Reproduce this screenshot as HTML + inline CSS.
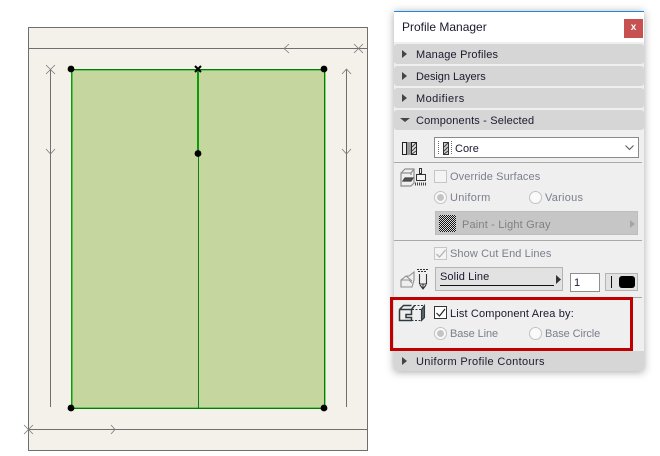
<!DOCTYPE html>
<html><head><meta charset="utf-8">
<style>
html,body{margin:0;padding:0;background:#fff}
#r{position:relative;width:660px;height:456px;overflow:hidden;background:#fff;font-family:"Liberation Sans",sans-serif;font-size:11px;color:#1a1a2e}
.a{position:absolute}
.t{position:absolute;white-space:nowrap;line-height:14px;letter-spacing:.2px}
.g{color:#7b7f8c}
.bar{position:absolute;left:394px;width:250px;height:20px;background:#d6d6d6;border-radius:3px}
.cb{position:absolute;width:11px;height:11px;border:1px solid #c6c6c6;background:#f4f4f4}
.rd{position:absolute;width:11px;height:11px;border:1px solid #c2c2c2;border-radius:50%;background:#fafafa}
.rd.on:after{content:"";position:absolute;left:2px;top:2px;width:7px;height:7px;border-radius:50%;background:#c4c4c4}
</style></head><body><div id="r">
<svg class="a" style="left:0;top:0" width="392" height="456" fill="none" shape-rendering="crispEdges">
<rect x="28.500" y="27.500" width="339" height="423" fill="#f3f1ea" stroke="#6f6f6f"/>
<path d="M28 48.500H367M28 429.500H367M50.500 70V407M346.500 70V407" stroke="#6f6f6f"/>
<rect x="71" y="69" width="254" height="339" fill="#c5d69e"/>
<g shape-rendering="auto" stroke="#7a7a7a" stroke-width=".8">
<path d="M46 65l9 9M55 65l-9 9M46 149l4.500 5 4.500-5M342 74l4.500-5 4.500 5M342 149l4.500 5 4.500-5M289 44l-5 4.500 5 4.500M363 44l-9 9M354 44l9 9M24 425l9 9M33 425l-9 9M111 425l4 4.500-4 4.500"/>
</g>
<path d="M71.500 70V408" stroke="#0f9a0f"/>
<path d="M72.500 70V407" stroke="#5fc04f"/>
<path d="M71 69.500H325M71 408.500H325" stroke="#0a780a"/>
<path d="M324.500 70V408" stroke="#0a780a"/>
<path d="M325.500 70V408" stroke="#7fd870"/>
<path d="M72 407.500H324M72 70.500H324" stroke="#6cc75c"/>
<path d="M198.500 153V408" stroke="#0f7f0f"/>
<path d="M197 70h2V153h-2z" fill="#0a9c0a"/>
<g shape-rendering="auto" fill="#000">
<circle cx="71" cy="69" r="3.400"/><circle cx="324" cy="69" r="3.400"/><circle cx="71" cy="408" r="3.400"/><circle cx="324" cy="408" r="3.400"/><circle cx="198" cy="153.500" r="3.400"/>
<path d="M195 66l6 6M201 66l-6 6" stroke="#000" stroke-width="2"/>
</g>
</svg>

<div class="a" style="left:394px;top:11px;width:250px;height:360px;background:#efefef;box-shadow:0 1px 8px rgba(0,0,0,.35)"></div>
<div class="a" style="left:394px;top:11px;width:250px;height:31px;background:#fff;border-top:1px solid #1e88e5;box-sizing:border-box"></div>
<div class="t" style="left:402px;top:20px;font-size:12px;letter-spacing:0">Profile Manager</div>
<div class="a" style="left:624px;top:19px;width:19px;height:19px;background:#c75050;color:#fff;font:bold 10px/18px 'Liberation Sans',sans-serif;text-align:center">x</div>

<div class="bar" style="top:44px"></div>
<div class="bar" style="top:66px"></div>
<div class="bar" style="top:88px"></div>
<div class="bar" style="top:110px"></div>
<div class="bar" style="top:351px;height:20px;border-radius:0 0 2px 2px"></div>
<svg class="a" style="left:394px;top:40px" width="20" height="330" fill="#444">
<path d="M8 10l5 4-5 4zM8 32l5 4-5 4zM8 54l5 4-5 4zM6 78h10l-5 4zM8 317l5 4-5 4z"/>
</svg>
<div class="t" style="left:416px;top:48px;letter-spacing:.18px">Manage Profiles</div>
<div class="t" style="left:416px;top:70px;letter-spacing:-.05px">Design Layers</div>
<div class="t" style="left:416px;top:92px;letter-spacing:.45px">Modifiers</div>
<div class="t" style="left:416px;top:114px;letter-spacing:.16px">Components - Selected</div>
<div class="t" style="left:416px;top:355px;letter-spacing:.35px">Uniform Profile Contours</div>

<!-- core row -->
<svg class="a" style="left:400px;top:139px" width="20" height="18" fill="none" stroke="#222" shape-rendering="crispEdges">
<rect x="2.500" y="3.500" width="4" height="12"/>
<rect x="7" y="3" width="4" height="13" fill="#999" stroke="none"/>
<rect x="11.500" y="3.500" width="5" height="12" fill="#ddd"/>
<path d="M12 8l4-4M12 12l4-4M12 15l4-3" stroke="#444" shape-rendering="auto"/>
</svg>
<div class="a" style="left:434px;top:137px;width:205px;height:21px;box-sizing:border-box;background:#fff;border:1px solid #8a8a8a"></div>
<svg class="a" style="left:436px;top:139px" width="20" height="18" fill="none" stroke="#333" shape-rendering="crispEdges">
<path d="M2.500 2v14" stroke="#666" stroke-dasharray="1 1"/>
<rect x="7.500" y="3.500" width="5" height="12" fill="#ccc"/><path d="M8 8l4-4M8 12l4-4M8 15l4-3" stroke="#444" shape-rendering="auto"/>
<path d="M15.500 2v14" stroke="#666" stroke-dasharray="1 1"/>
</svg>
<div class="t" style="left:455px;top:142px;letter-spacing:0">Core</div>
<svg class="a" style="left:624px;top:144px" width="12" height="8" fill="none" stroke="#555"><path d="M1.500 1.500l4 4 4-4"/></svg>
<div class="a" style="left:394px;top:162px;width:248px;height:1px;background:#a9a9a9"></div>

<!-- override -->
<svg class="a" style="left:399px;top:166px" width="30" height="22" fill="none" stroke="#8f8f8f" stroke-width="1.200">
<path d="M2 7l4-4h9v14l-3 3H2zM2 7h10v2M12 3h-1M15 3l-3 4"/>
<path d="M4 15l2-3h8l-2 3z" fill="#555" stroke="#444"/>
<path d="M20.500 2.500h2v5h-2z" stroke="#333" stroke-width="1"/>
<rect x="17.500" y="8.500" width="9" height="6" fill="#f4f4f4" stroke="#333" stroke-width="1"/>
<path d="M16 18h11" stroke="#444" stroke-dasharray="1 1" stroke-width="3"/>
</svg>
<div class="cb" style="left:434px;top:170px"></div>
<div class="t g" style="left:450px;top:170px;letter-spacing:.1px">Override Surfaces</div>
<div class="rd on" style="left:434px;top:191px"></div>
<div class="t g" style="left:450px;top:191px;letter-spacing:.3px">Uniform</div>
<div class="rd" style="left:529px;top:191px"></div>
<div class="t g" style="left:545px;top:191px;letter-spacing:.25px">Various</div>
<div class="a" style="left:435px;top:211px;width:203px;height:24px;background:#c6c6c6;border:1px solid #bdbdbd;box-sizing:border-box"></div>
<div class="a" style="left:439px;top:215px;width:17px;height:17px;background:repeating-conic-gradient(#111 0 25%,#ddd 0 50%) 0 0/2px 2px;border-radius:2px"></div>
<div class="t" style="left:462px;top:218px;color:#808080;letter-spacing:.17px">Paint - Light Gray</div>
<svg class="a" style="left:629px;top:219px" width="8" height="10" fill="#a4a4a4"><path d="M1 1l5 4-5 4z"/></svg>
<div class="a" style="left:394px;top:240px;width:248px;height:1px;background:#a9a9a9"></div>

<!-- cut end -->
<div class="cb" style="left:434px;top:247px"></div>
<svg class="a" style="left:435px;top:248px" width="12" height="12" fill="none" stroke="#b4b4b4" stroke-width="1.300"><path d="M1.500 6l3 3 6-7"/></svg>
<div class="t g" style="left:450px;top:247px;letter-spacing:.1px">Show Cut End Lines</div>
<svg class="a" style="left:399px;top:267px" width="30" height="24" fill="none" stroke="#8f8f8f" stroke-width="1.100">
<path d="M2 13l5-4h3l5-4v8l-2 7H2zM2 13h8l3 3M7 9l6 5"/>
<path d="M18 2.500h11M19 4.500h9" stroke="#333" stroke-dasharray="2 1"/>
<path d="M20.500 7v10h7V7M24 17v5M21 18l3 4 3-4" stroke="#333"/>
</svg>
<div class="a" style="left:435px;top:267px;width:128px;height:24px;background:#e2e2e2;border:1px solid #b4b4b4;box-sizing:border-box"></div>
<div class="t" style="left:440px;top:270px;letter-spacing:.1px">Solid Line</div>
<div class="a" style="left:440px;top:285px;width:114px;height:1px;background:#111"></div>
<svg class="a" style="left:555px;top:274px" width="8" height="11" fill="#333"><path d="M1 1l5 4.500-5 4.500z"/></svg>
<div class="a" style="left:570px;top:273px;width:30px;height:19px;box-sizing:border-box;background:#fff;border:1px solid #8f8f8f"></div>
<div class="t" style="left:574px;top:276px">1</div>
<div class="a" style="left:605px;top:273px;width:33px;height:18px;box-sizing:border-box;background:#e2e2e2;border:1px solid #b4b4b4"></div>
<div class="a" style="left:611px;top:276px;width:1px;height:12px;background:#111"></div>
<div class="a" style="left:619px;top:276px;width:16px;height:12px;background:#000;border-radius:3px"></div>
<div class="a" style="left:633px;top:297px;width:9px;height:1px;background:#a9a9a9"></div>

<!-- list component area -->
<svg class="a" style="left:398px;top:304px" width="29" height="19" fill="none" stroke="#2f3a40" stroke-width="1.500">
<path d="M1.500 5.500l4-4h8M1.500 5.500v11h12v-3H8v-3h5.500v-5h-12M13.500 5.500l3-4"/>
<path d="M16 1.500h10.500M13.500 16.500h10M23.500 5.500v11M14 5.500h9.500" stroke-dasharray="2 1.500" stroke-width="1.100"/>
<path d="M26.500 1.500v12l-3 3v-11z" fill="#5a6468" stroke="#2f3a40" stroke-width="1.100"/>
</svg>
<div class="a" style="left:434px;top:306px;width:13px;height:13px;box-sizing:border-box;border:1px solid #333;background:#fff"></div>
<svg class="a" style="left:435px;top:307px" width="12" height="12" fill="none" stroke="#222" stroke-width="1.200"><path d="M1.500 6l3 3 5.500-7"/></svg>
<div class="t" style="left:450px;top:307px;letter-spacing:.15px">List Component Area by:</div>
<div class="rd on" style="left:434px;top:327px"></div>
<div class="t g" style="left:450px;top:327px;letter-spacing:-.1px">Base Line</div>
<div class="rd" style="left:529px;top:327px"></div>
<div class="t g" style="left:545px;top:327px;letter-spacing:-.1px">Base Circle</div>

<div class="a" style="left:390px;top:297px;width:243px;height:54px;box-sizing:border-box;border:3px solid #c00000"></div>
</div></body></html>
